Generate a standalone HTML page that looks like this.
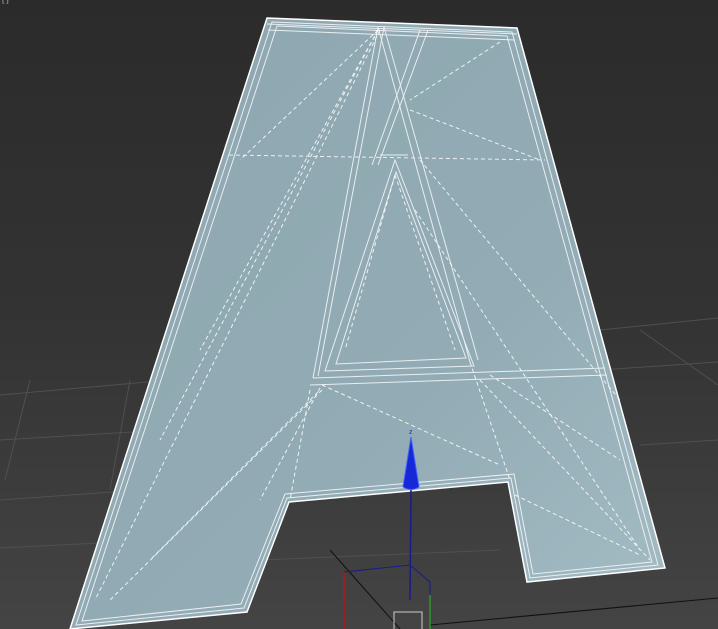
<!DOCTYPE html>
<html><head><style>
html,body{margin:0;padding:0;background:#2f2f2f;}
svg{display:block;}
</style></head><body>
<svg width="718" height="629" viewBox="0 0 718 629" xmlns="http://www.w3.org/2000/svg">
<defs>
<linearGradient id="bg" x1="0" y1="0" x2="0" y2="1">
<stop offset="0" stop-color="#2b2b2b"/><stop offset="0.5" stop-color="#333"/><stop offset="1" stop-color="#444"/>
</linearGradient>
<linearGradient id="fa" x1="0" y1="0" x2="1" y2="1">
<stop offset="0" stop-color="#8ea7b0"/><stop offset="0.6" stop-color="#92abb4"/><stop offset="1" stop-color="#a4bcc4"/>
</linearGradient>
</defs>
<rect width="718" height="629" fill="url(#bg)"/>
<text x="2" y="2" font-family="Liberation Sans, sans-serif" font-size="8" fill="#bbb">[ ]</text>
<g stroke="#505050" stroke-width="1" fill="none">
<line x1="0" y1="395" x2="170" y2="380"/><line x1="0" y1="440" x2="165" y2="430"/>
<line x1="0" y1="500" x2="140" y2="490"/><line x1="0" y1="548" x2="100" y2="543"/>
<line x1="600" y1="370" x2="718" y2="362"/><line x1="600" y1="330" x2="718" y2="318"/>
<line x1="640" y1="445" x2="718" y2="440"/><line x1="30" y1="380" x2="5" y2="480"/>
<line x1="130" y1="380" x2="110" y2="490"/><line x1="640" y1="330" x2="718" y2="385"/>
<line x1="260" y1="560" x2="500" y2="550"/>
</g>
<line x1="430" y1="625" x2="718" y2="598" stroke="#111" stroke-width="1"/>
<line x1="330" y1="550" x2="400" y2="629" stroke="#111" stroke-width="1"/>
<path d="M267,18 L517,28 L665,568 L527,582 L508,482 L289,502 L247,612 L70,629 Z" fill="url(#fa)" stroke="#fff" stroke-width="1.5"/>
<g stroke="#f2f6f8" stroke-width="1" fill="none" opacity="0.9">
<path d="M272,22 L512,32 L658,565 L530,578 L511,478 L287,498 L244,608 L76,625 Z"/>
<path d="M277,26 L507,36 L652,562 L533,574 L514,474 L285,494 L241,604 L82,621 Z"/>
<path d="M395,160 L325,371 L474,366 Z"/><path d="M396,172 L336,364 L466,358 Z"/>
<path d="M378,27 L313,378"/><path d="M384,27 L318,376"/>
<path d="M428,30 L378,165"/><path d="M420,30 L372,165"/><path d="M378,27 L470,362"/><path d="M384,27 L478,360"/>
<path d="M313,378 L605,368" /><path d="M310,385 L607,375"/>
<path d="M380,155 L408,155"/><path d="M229,155 L545,160" stroke-dasharray="4,3"/>
<path d="M267,24 L517,34"/><path d="M268,30 L515,40"/>
</g>
<g stroke="#fff" stroke-width="1" fill="none" stroke-dasharray="4,3" opacity="0.85">
<path d="M378,30 L240,160"/><path d="M378,30 L200,350"/><path d="M378,30 L160,440"/>
<path d="M380,30 L95,600"/><path d="M500,42 L410,100"/><path d="M410,110 L540,160"/>
<path d="M420,160 L620,400"/><path d="M415,210 L640,550"/><path d="M322,390 L110,600"/>
<path d="M320,388 L260,500"/><path d="M318,392 L150,560"/><path d="M322,385 L500,465"/>
<path d="M480,380 L650,560"/><path d="M490,375 L620,460"/><path d="M515,495 L640,555"/>
<path d="M310,390 L290,500"/><path d="M470,362 L510,480"/>
<path d="M395,175 L345,350"/><path d="M395,175 L455,350"/>
</g>
<line x1="411" y1="490" x2="410" y2="600" stroke="#1a1a8a" stroke-width="1.5"/>
<polyline points="344,629 344,572 410,565 430,582 430,629" fill="none" stroke="#1a1a8a" stroke-width="1"/>
<line x1="344" y1="572" x2="344" y2="629" stroke="#aa1a1a" stroke-width="1.5"/>
<line x1="430" y1="595" x2="430" y2="629" stroke="#2a9a2a" stroke-width="1.5"/>
<rect x="394" y="612" width="28" height="20" fill="none" stroke="#ccc" stroke-width="1"/>
<path d="M411,437 L419,487 Q411,492 403,487 Z" fill="#1628d8" stroke="#4060ff" stroke-width="1"/>
<text x="409" y="434" font-family="Liberation Sans, sans-serif" font-size="7" fill="#2030c0">z</text>
</svg>
</body></html>
